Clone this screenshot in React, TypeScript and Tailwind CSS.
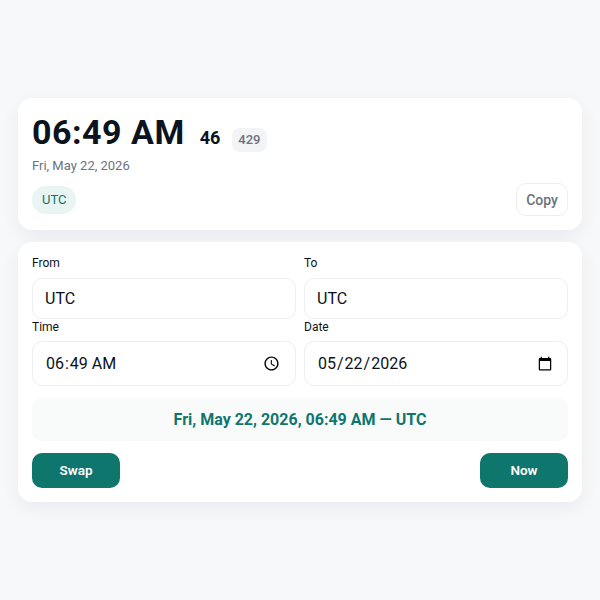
const inputClass =
  "w-full rounded-[10px] border border-[#eceef1] bg-white px-3 text-base text-[#0b1220] outline-none"

const Field = ({ label, children }: { label: string; children: React.ReactNode }) => (
  <div className="flex flex-col">
    <label className="mb-[6px] block text-xs leading-[18px] text-[#0b1220]">{label}</label>
    {children}
  </div>
)

export default function App() {
  return (
    <div className="flex min-h-screen flex-col justify-center gap-3 bg-[#f6f8fa] px-[18px] font-['Roboto',sans-serif]">
      {/* Clock card */}
      <div className="h-[132px] rounded-[14px] bg-white px-[14px] pt-[14px] shadow-[0_6px_18px_rgba(15,23,32,0.06)]">
        <div className="flex items-baseline gap-3">
          <span className="text-[34px] leading-10 font-bold tracking-[0.5px] text-[#0b1220]">06:49 AM</span>
          <span className="ml-[3px] text-lg leading-6 font-bold text-[#0b1220]">46</span>
          <span className="rounded-lg bg-[#f3f4f6] px-[6px] py-[3px] text-[13px] leading-[18px] font-medium text-[#6b7280]">
            429
          </span>
        </div>
        <div className="mt-1 text-[13px] leading-5 text-[#6b7280]">Fri, May 22, 2026</div>
        <div className="mt-[7px] flex items-center justify-between">
          <span className="rounded-full bg-[#e9f5f2] px-[10px] py-[5px] text-[13px] leading-[18px] text-[#0f766e]">UTC</span>
          <button className="h-[33px] w-[52px] rounded-[10px] border border-[#eceef1] bg-white text-sm font-medium text-[#6b7280]">
            Copy
          </button>
        </div>
      </div>

      {/* Converter card */}
      <div className="h-[260px] rounded-[14px] bg-white px-[14px] pt-3 shadow-[0_6px_18px_rgba(15,23,32,0.06)]">
        <div className="grid grid-cols-2 gap-x-2">
          <Field label="From">
            <input defaultValue="UTC" className={`${inputClass} h-[41px]`} />
          </Field>
          <Field label="To">
            <input defaultValue="UTC" className={`${inputClass} h-[41px]`} />
          </Field>
          <div className="-mt-px">
            <Field label="Time">
              <input type="time" defaultValue="06:49" className={`${inputClass} -mt-px h-[45px]`} />
            </Field>
          </div>
          <div className="-mt-px">
            <Field label="Date">
              <input type="date" defaultValue="2026-05-22" className={`${inputClass} -mt-px h-[45px]`} />
            </Field>
          </div>
        </div>

        <div className="mt-3 flex h-[43px] items-center justify-center rounded-[10px] bg-[#f8fbfa] text-base font-bold text-[#0f766e]">
          Fri, May 22, 2026, 06:49 AM — UTC
        </div>

        <div className="mt-3 flex justify-between">
          <button className="h-[35px] w-[88px] rounded-[10px] bg-[#0f766e] text-[13.5px] font-semibold text-white">Swap</button>
          <button className="h-[35px] w-[88px] rounded-[10px] bg-[#0f766e] text-[13.5px] font-semibold text-white">Now</button>
        </div>
      </div>
    </div>
  )
}
